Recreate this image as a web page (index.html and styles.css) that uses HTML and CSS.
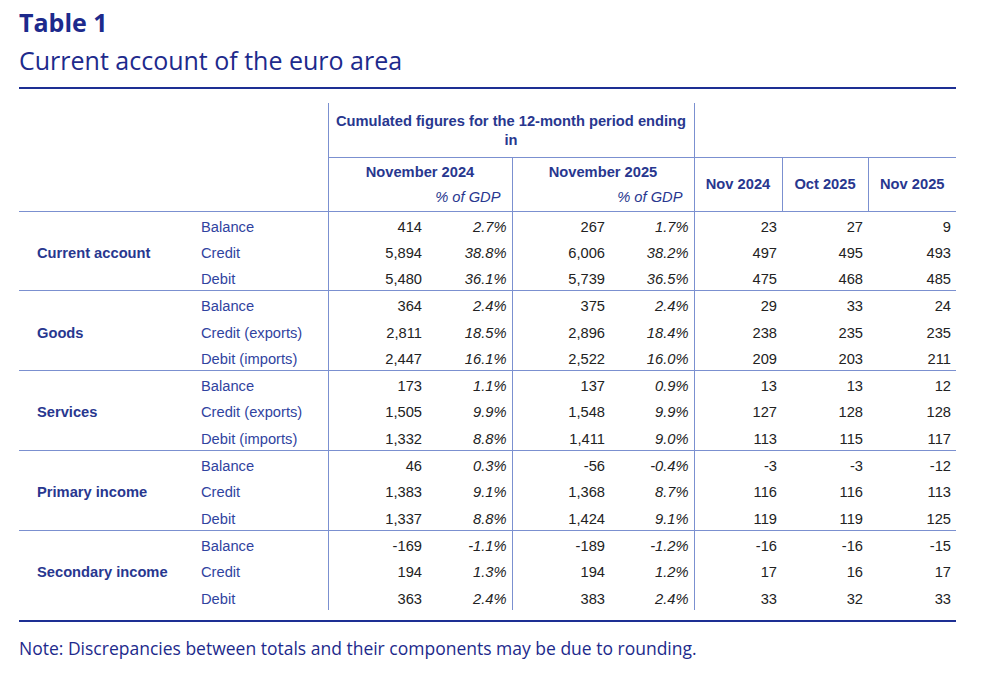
FILE: index.html
```html
<!DOCTYPE html>
<html>
<head>
<meta charset="utf-8">
<link rel="stylesheet" href="styles.css">
</head>
<body>
<div class="page">
  <h1 class="title">Table 1</h1>
  <h2 class="subtitle">Current account of the euro area</h2>
  <div class="rule"></div>
  <table class="ca">
    <colgroup>
      <col class="c-a"><col class="c-b"><col class="c-c"><col class="c-d"><col class="c-e"><col class="c-f"><col class="c-g"><col class="c-h"><col class="c-i">
    </colgroup>
    <thead>
      <tr class="hr1">
        <th class="blank" rowspan="3" colspan="2"></th>
        <th class="cum" colspan="4">Cumulated figures for the 12-month period ending<br>in</th>
        <th class="blank-r" colspan="3"></th>
      </tr>
      <tr class="hr2">
        <th class="per bl br" colspan="2">November 2024</th>
        <th class="per br" colspan="2">November 2025</th>
        <th class="mon br" rowspan="2">Nov 2024</th>
        <th class="mon br" rowspan="2">Oct 2025</th>
        <th class="mon" rowspan="2">Nov 2025</th>
      </tr>
      <tr class="hr3">
        <th class="gdp bl br" colspan="2">% of GDP</th>
        <th class="gdp br" colspan="2">% of GDP</th>
      </tr>
    </thead>
    <tbody class="grp">
      <tr><td class="glab" rowspan="3">Current account</td><td class="sub">Balance</td><td class="n bl">414</td><td class="p br">2.7%</td><td class="n">267</td><td class="p br">1.7%</td><td class="n">23</td><td class="n">27</td><td class="n">9</td></tr>
      <tr><td class="sub">Credit</td><td class="n bl">5,894</td><td class="p br">38.8%</td><td class="n">6,006</td><td class="p br">38.2%</td><td class="n">497</td><td class="n">495</td><td class="n">493</td></tr>
      <tr><td class="sub">Debit</td><td class="n bl">5,480</td><td class="p br">36.1%</td><td class="n">5,739</td><td class="p br">36.5%</td><td class="n">475</td><td class="n">468</td><td class="n">485</td></tr>
    </tbody>
    <tbody class="grp">
      <tr><td class="glab" rowspan="3">Goods</td><td class="sub">Balance</td><td class="n bl">364</td><td class="p br">2.4%</td><td class="n">375</td><td class="p br">2.4%</td><td class="n">29</td><td class="n">33</td><td class="n">24</td></tr>
      <tr><td class="sub">Credit (exports)</td><td class="n bl">2,811</td><td class="p br">18.5%</td><td class="n">2,896</td><td class="p br">18.4%</td><td class="n">238</td><td class="n">235</td><td class="n">235</td></tr>
      <tr><td class="sub">Debit (imports)</td><td class="n bl">2,447</td><td class="p br">16.1%</td><td class="n">2,522</td><td class="p br">16.0%</td><td class="n">209</td><td class="n">203</td><td class="n">211</td></tr>
    </tbody>
    <tbody class="grp">
      <tr><td class="glab" rowspan="3">Services</td><td class="sub">Balance</td><td class="n bl">173</td><td class="p br">1.1%</td><td class="n">137</td><td class="p br">0.9%</td><td class="n">13</td><td class="n">13</td><td class="n">12</td></tr>
      <tr><td class="sub">Credit (exports)</td><td class="n bl">1,505</td><td class="p br">9.9%</td><td class="n">1,548</td><td class="p br">9.9%</td><td class="n">127</td><td class="n">128</td><td class="n">128</td></tr>
      <tr><td class="sub">Debit (imports)</td><td class="n bl">1,332</td><td class="p br">8.8%</td><td class="n">1,411</td><td class="p br">9.0%</td><td class="n">113</td><td class="n">115</td><td class="n">117</td></tr>
    </tbody>
    <tbody class="grp">
      <tr><td class="glab" rowspan="3">Primary income</td><td class="sub">Balance</td><td class="n bl">46</td><td class="p br">0.3%</td><td class="n">-56</td><td class="p br">-0.4%</td><td class="n">-3</td><td class="n">-3</td><td class="n">-12</td></tr>
      <tr><td class="sub">Credit</td><td class="n bl">1,383</td><td class="p br">9.1%</td><td class="n">1,368</td><td class="p br">8.7%</td><td class="n">116</td><td class="n">116</td><td class="n">113</td></tr>
      <tr><td class="sub">Debit</td><td class="n bl">1,337</td><td class="p br">8.8%</td><td class="n">1,424</td><td class="p br">9.1%</td><td class="n">119</td><td class="n">119</td><td class="n">125</td></tr>
    </tbody>
    <tbody class="grp last">
      <tr><td class="glab" rowspan="3">Secondary income</td><td class="sub">Balance</td><td class="n bl">-169</td><td class="p br">-1.1%</td><td class="n">-189</td><td class="p br">-1.2%</td><td class="n">-16</td><td class="n">-16</td><td class="n">-15</td></tr>
      <tr><td class="sub">Credit</td><td class="n bl">194</td><td class="p br">1.3%</td><td class="n">194</td><td class="p br">1.2%</td><td class="n">17</td><td class="n">16</td><td class="n">17</td></tr>
      <tr><td class="sub">Debit</td><td class="n bl">363</td><td class="p br">2.4%</td><td class="n">383</td><td class="p br">2.4%</td><td class="n">33</td><td class="n">32</td><td class="n">33</td></tr>
    </tbody>
  </table>
  <div class="rule rule-bottom"></div>
  <p class="note">Note: Discrepancies between totals and their components may be due to rounding.</p>
</div>
</body>
</html>
```

FILE: styles.css
```css
html, body {
  margin: 0;
  padding: 0;
  background: #ffffff;
}

.page {
  padding: 0 0 0 19px;
  width: 937px;
  font-family: "Open Sans", "Liberation Sans", sans-serif;
  color: #1d2a8c;
}

.title {
  margin: 0;
  padding-top: 5px;
  font-size: 25px;
  line-height: 34px;
  font-weight: 700;
  color: #1d2a8c;
}

.subtitle {
  margin: 0;
  padding-top: 4px;
  font-size: 25px;
  line-height: 34px;
  font-weight: 400;
  color: #1d2a8c;
}

.rule {
  height: 2px;
  background: #1d2f93;
  margin-top: 10px;
}

.rule-bottom {
  margin-top: 10px;
}

.ca {
  margin-top: 14px;
  width: 937px;
  table-layout: fixed;
  border-collapse: collapse;
  font-family: "Liberation Sans", Arial, sans-serif;
  font-size: 14.7px;
  color: #222222;
}

.c-a { width: 182px; }
.c-b { width: 127px; }
.c-c { width: 99px; }
.c-d { width: 85px; }
.c-e { width: 98px; }
.c-f { width: 84px; }
.c-g { width: 88px; }
.c-h { width: 86px; }
.c-i { width: 88px; }

.ca th, .ca td {
  padding: 0;
}

.ca th {
  color: #28378f;
  font-weight: 700;
}

.hr1 { height: 54px; }
.hr2 { height: 27px; }
.hr3 { height: 27px; }

.ca .blank {
  border-bottom: 1px solid #7b90d0;
}

.ca .cum {
  border-left: 1px solid #7b90d0;
  border-right: 1px solid #7b90d0;
  border-bottom: 1px solid #7b90d0;
  text-align: center;
  vertical-align: middle;
  line-height: 19px;
  padding-top: 3px;
}

.ca .blank-r {
  border-bottom: 1px solid #7b90d0;
}

.ca .per {
  text-align: center;
  vertical-align: middle;
  padding-top: 2px;
}

.ca th.gdp {
  text-align: right;
  font-style: italic;
  font-weight: 400;
  padding-right: 11px;
  vertical-align: middle;
  border-bottom: 1px solid #7b90d0;
}

.ca .mon {
  text-align: center;
  vertical-align: middle;
  border-bottom: 1px solid #7b90d0;
}

.ca .bl { border-left: 1px solid #7b90d0; }
.ca .br { border-right: 1px solid #7b90d0; }

.grp tr { height: 26.6px; }

.grp tr:last-child td {
  border-bottom: 1px solid #7b90d0;
}

.grp .glab {
  border-bottom: 1px solid #7b90d0;
}

.last tr:last-child td,
.last .glab {
  border-bottom: none;
}

.ca td {
  vertical-align: middle;
  padding-top: 4px;
}

.ca td.glab {
  padding-left: 18px;
  font-weight: 700;
  color: #28378f;
}

.ca td.sub {
  color: #3043a0;
}

.ca td.n {
  text-align: right;
  padding-right: 5px;
}

.ca td.p {
  text-align: right;
  font-style: italic;
  padding-right: 5px;
}

.note {
  margin: 14px 0 0 0;
  font-size: 17.5px;
  line-height: 24px;
  color: #1d2a8c;
}
```
